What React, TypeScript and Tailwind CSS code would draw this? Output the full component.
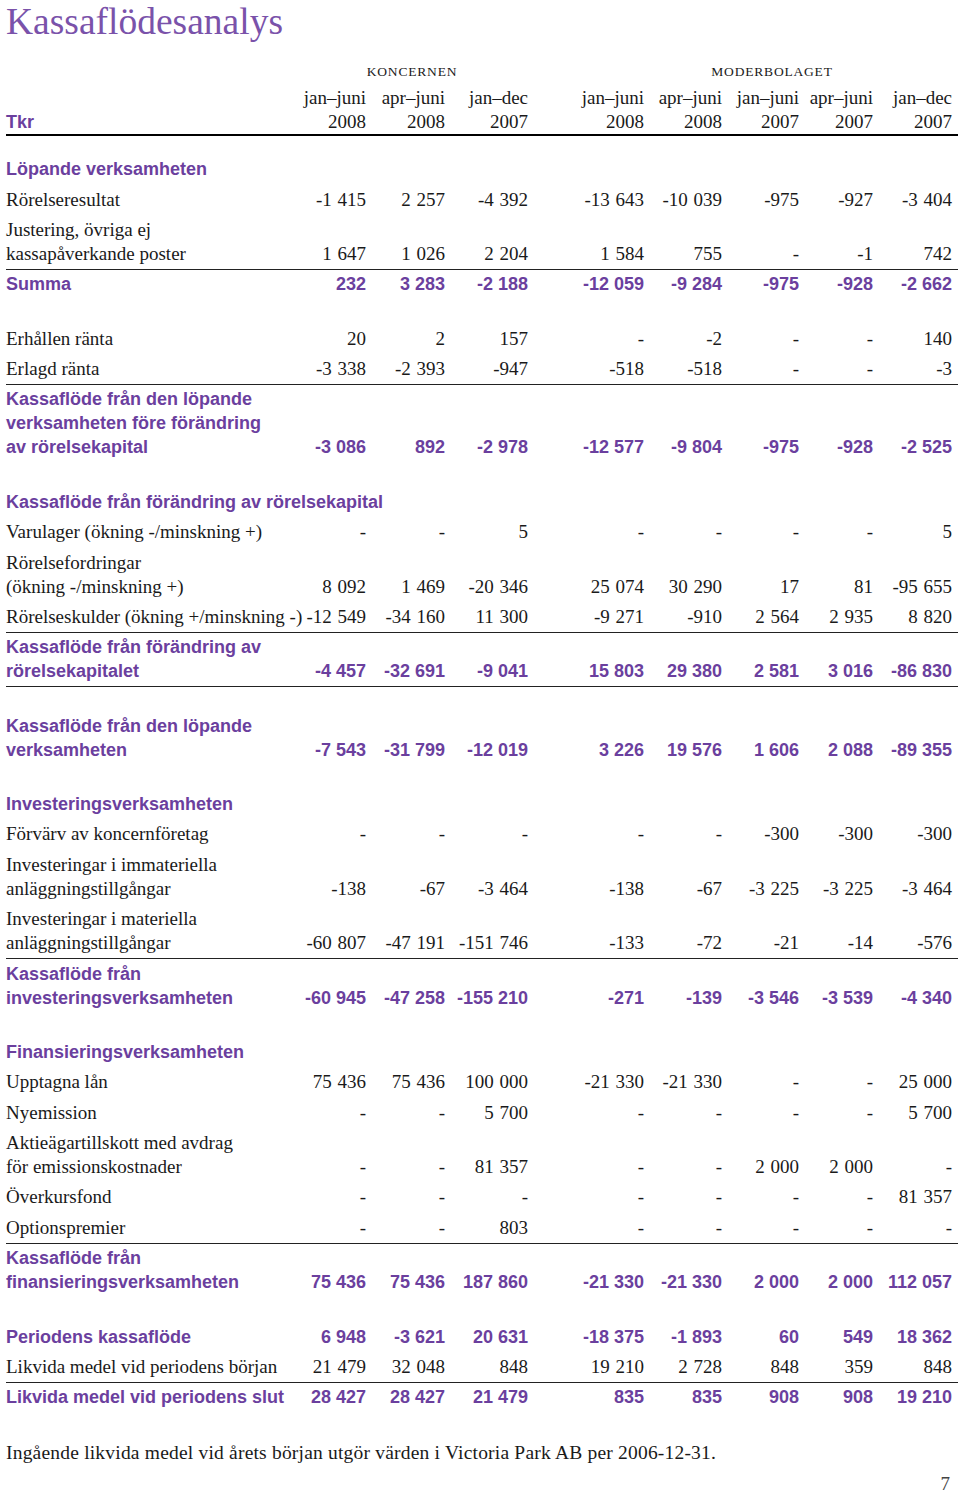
import React from 'react';

type Row =
  | { kind: 'head'; label: string }
  | { kind: 'gap' }
  | { kind: 'item' | 'sum'; label: string[]; v: string[]; top?: boolean; bottom?: boolean };

const rows: Row[] = [
  { kind: 'head', label: 'Löpande verksamheten' },
  { kind: 'item', label: ['Rörelseresultat'], v: ['-1 415', '2 257', '-4 392', '-13 643', '-10 039', '-975', '-927', '-3 404'] },
  { kind: 'item', label: ['Justering, övriga ej', 'kassapåverkande poster'], v: ['1 647', '1 026', '2 204', '1 584', '755', '-', '-1', '742'] },
  { kind: 'sum', top: true, label: ['Summa'], v: ['232', '3 283', '-2 188', '-12 059', '-9 284', '-975', '-928', '-2 662'] },
  { kind: 'gap' },
  { kind: 'item', label: ['Erhållen ränta'], v: ['20', '2', '157', '-', '-2', '-', '-', '140'] },
  { kind: 'item', label: ['Erlagd ränta'], v: ['-3 338', '-2 393', '-947', '-518', '-518', '-', '-', '-3'] },
  { kind: 'sum', top: true, label: ['Kassaflöde från den löpande', 'verksamheten före förändring', 'av rörelsekapital'], v: ['-3 086', '892', '-2 978', '-12 577', '-9 804', '-975', '-928', '-2 525'] },
  { kind: 'gap' },
  { kind: 'head', label: 'Kassaflöde från förändring av rörelsekapital' },
  { kind: 'item', label: ['Varulager (ökning -/minskning +)'], v: ['-', '-', '5', '-', '-', '-', '-', '5'] },
  { kind: 'item', label: ['Rörelsefordringar', '(ökning -/minskning +)'], v: ['8 092', '1 469', '-20 346', '25 074', '30 290', '17', '81', '-95 655'] },
  { kind: 'item', label: ['Rörelseskulder (ökning +/minskning -)'], v: ['-12 549', '-34 160', '11 300', '-9 271', '-910', '2 564', '2 935', '8 820'] },
  { kind: 'sum', top: true, bottom: true, label: ['Kassaflöde från förändring av', 'rörelsekapitalet'], v: ['-4 457', '-32 691', '-9 041', '15 803', '29 380', '2 581', '3 016', '-86 830'] },
  { kind: 'gap' },
  { kind: 'sum', label: ['Kassaflöde från den löpande', 'verksamheten'], v: ['-7 543', '-31 799', '-12 019', '3 226', '19 576', '1 606', '2 088', '-89 355'] },
  { kind: 'gap' },
  { kind: 'head', label: 'Investeringsverksamheten' },
  { kind: 'item', label: ['Förvärv av koncernföretag'], v: ['-', '-', '-', '-', '-', '-300', '-300', '-300'] },
  { kind: 'item', label: ['Investeringar i immateriella', 'anläggningstillgångar'], v: ['-138', '-67', '-3 464', '-138', '-67', '-3 225', '-3 225', '-3 464'] },
  { kind: 'item', label: ['Investeringar i materiella', 'anläggningstillgångar'], v: ['-60 807', '-47 191', '-151 746', '-133', '-72', '-21', '-14', '-576'] },
  { kind: 'sum', top: true, label: ['Kassaflöde från', 'investeringsverksamheten'], v: ['-60 945', '-47 258', '-155 210', '-271', '-139', '-3 546', '-3 539', '-4 340'] },
  { kind: 'gap' },
  { kind: 'head', label: 'Finansieringsverksamheten' },
  { kind: 'item', label: ['Upptagna lån'], v: ['75 436', '75 436', '100 000', '-21 330', '-21 330', '-', '-', '25 000'] },
  { kind: 'item', label: ['Nyemission'], v: ['-', '-', '5 700', '-', '-', '-', '-', '5 700'] },
  { kind: 'item', label: ['Aktieägartillskott med avdrag', 'för emissionskostnader'], v: ['-', '-', '81 357', '-', '-', '2 000', '2 000', '-'] },
  { kind: 'item', label: ['Överkursfond'], v: ['-', '-', '-', '-', '-', '-', '-', '81 357'] },
  { kind: 'item', label: ['Optionspremier'], v: ['-', '-', '803', '-', '-', '-', '-', '-'] },
  { kind: 'sum', top: true, label: ['Kassaflöde från', 'finansieringsverksamheten'], v: ['75 436', '75 436', '187 860', '-21 330', '-21 330', '2 000', '2 000', '112 057'] },
  { kind: 'gap' },
  { kind: 'sum', label: ['Periodens kassaflöde'], v: ['6 948', '-3 621', '20 631', '-18 375', '-1 893', '60', '549', '18 362'] },
  { kind: 'item', label: ['Likvida medel vid periodens början'], v: ['21 479', '32 048', '848', '19 210', '2 728', '848', '359', '848'] },
  { kind: 'sum', top: true, label: ['Likvida medel vid periodens slut'], v: ['28 427', '28 427', '21 479', '835', '835', '908', '908', '19 210'] },
];

const cols = [
  ['jan–juni', '2008'],
  ['apr–juni', '2008'],
  ['jan–dec', '2007'],
  ['jan–juni', '2008'],
  ['apr–juni', '2008'],
  ['jan–juni', '2007'],
  ['apr–juni', '2007'],
  ['jan–dec', '2007'],
];

const grid = 'grid grid-cols-[290px_70px_79px_83px_116px_78px_77px_74px_85px] items-end';
const serif = "font-['Liberation_Serif',serif] text-[19px] text-[#1a1a1a]";
const sans = "font-['Liberation_Sans',Arial,sans-serif] font-bold text-[18px] text-[#6b3f9e]";

const App = () => {
  return (
    <div className="w-[960px] min-h-[1493px] bg-white overflow-hidden">
      {/* Title */}
      <h1 className="pl-[6px] leading-[44px] text-[37.5px] text-[#7a52aa] font-['Liberation_Serif',serif]">
        Kassaflödesanalys
      </h1>

      <div className="ml-[6px] w-[952px]">
        {/* Column groups */}
        <div className={`${grid} mt-[20px] leading-[16px] text-[13.5px] tracking-[0.06em] font-['Liberation_Serif',serif] text-[#1a1a1a]`}>
          <div></div>
          <div className="col-span-3 text-center">KONCERNEN</div>
          <div className="col-span-5 text-center pl-[64px] pr-[6px]">MODERBOLAGET</div>
        </div>

        {/* Column header */}
        <div className={`${grid} mt-[6px] border-b-2 border-black leading-[24px]`}>
          <div className={sans}>Tkr</div>
          {cols.map((c, i) => (
            <div key={i} className={`${serif} text-right ${i === 7 ? 'pr-[6px]' : ''}`}>
              <div>{c[0]}</div>
              <div>{c[1]}</div>
            </div>
          ))}
        </div>

        {/* Body */}
        <div className="mt-[18px]">
          {rows.map((r, idx) => {
            if (r.kind === 'gap') return <div key={idx} className="h-[24px]"></div>;
            if (r.kind === 'head')
              return (
                <div key={idx} className={`${sans} py-[3.2px] leading-[24px] whitespace-nowrap`}>
                  {r.label}
                </div>
              );
            const isSum = r.kind === 'sum';
            const txt = isSum ? sans : serif;
            return (
              <div
                key={idx}
                className={`${grid} leading-[24px] ${r.top ? 'border-t border-[#222] pt-[2.2px]' : 'pt-[3.2px]'} ${r.bottom ? 'border-b border-[#222] pb-[2.2px]' : 'pb-[3.2px]'}`}
              >
                <div className={`${txt} whitespace-nowrap`}>
                  {r.label.map((l, i) => (
                    <div key={i}>{l}</div>
                  ))}
                </div>
                {r.v.map((v, i) => (
                  <div
                    key={i}
                    className={`${txt} text-right whitespace-nowrap ${isSum ? '' : '[word-spacing:1px]'} ${i === 7 ? 'pr-[6px]' : ''}`}
                  >
                    {v}
                  </div>
                ))}
              </div>
            );
          })}
        </div>

        {/* Footnote */}
        <p className="font-['Liberation_Serif',serif] text-[19.5px] tracking-[0.2px] text-[#1a1a1a] mt-[28px] leading-[24px]">
          Ingående likvida medel vid årets början utgör värden i Victoria Park AB per 2006-12-31.
        </p>
        <div className="mt-[10px] pr-[8px] text-right leading-[18px] text-[19px] text-[#444] font-['Liberation_Serif',serif]">
          7
        </div>
      </div>
    </div>
  );
};

export default App;
